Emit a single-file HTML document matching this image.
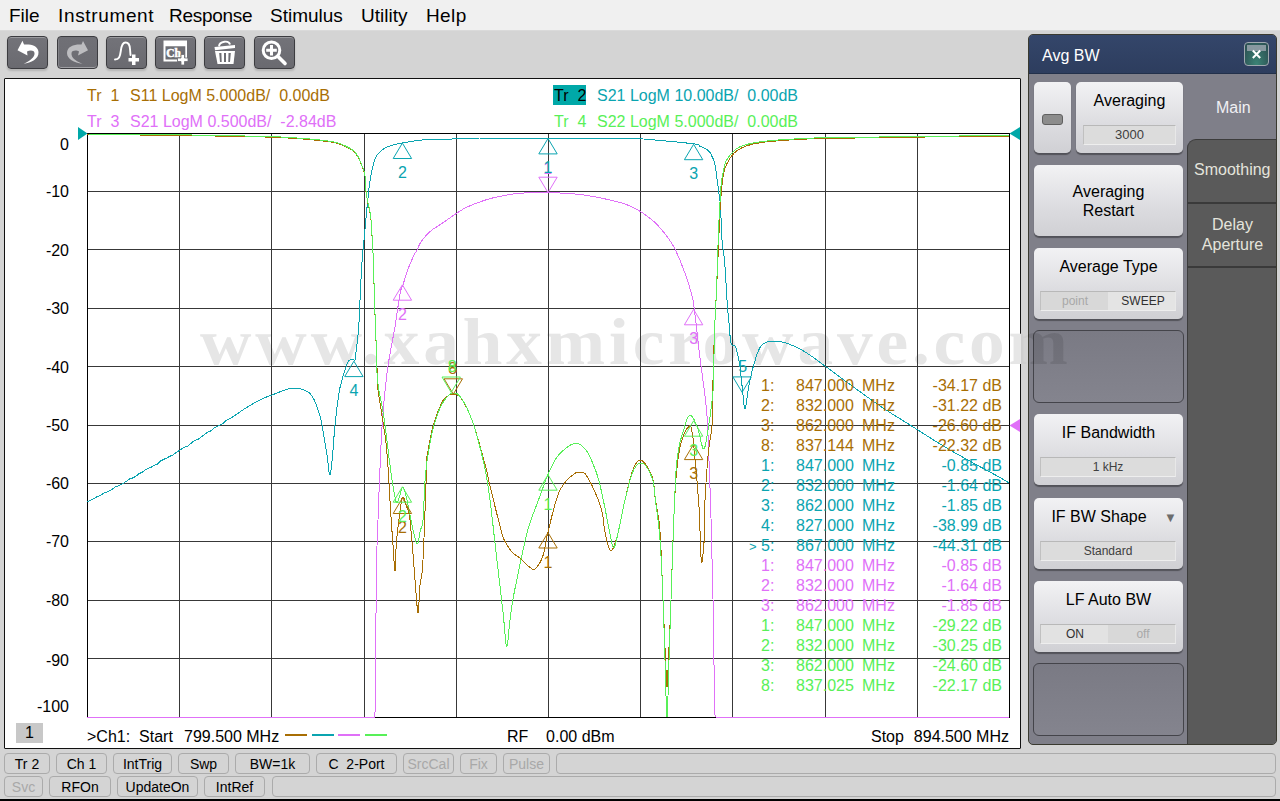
<!DOCTYPE html>
<html><head><meta charset="utf-8"><title>VNA</title>
<style>
*{box-sizing:border-box}
html,body{margin:0;padding:0}
body{width:1280px;height:801px;overflow:hidden;position:relative;background:#d4d4d4;font-family:"Liberation Sans",sans-serif;}
.a{position:absolute;white-space:pre;line-height:1}
.menu{position:absolute;left:0;top:0;width:1280px;height:31px;background:#f0f0f0;border-bottom:1px solid #dadada}
.menu span{position:absolute;top:6px;font-size:19px;color:#000;line-height:1}
.tb{position:absolute;top:36px;width:41px;height:33px;border-radius:4px;background:linear-gradient(#737379,#6a6a70);border:1px solid #3c3c40;box-shadow:0 2px 2px rgba(0,0,0,0.15), inset 0 1px 0 rgba(255,255,255,0.28)}
.tb svg{position:absolute;left:0;top:0}
.chart{position:absolute;left:4px;top:78px;width:1017px;height:671px;background:#fff;border:1px solid #111;border-radius:1px}
.rp{position:absolute;left:1028px;top:34px;width:249px;height:711px;background:#7f7f89;border:1px solid #3a3a30;border-radius:5px;overflow:hidden}
.title{position:absolute;left:0;top:0;width:249px;height:39px;background:linear-gradient(#34466a,#2d3d5e);border-bottom:1px solid #22304a}
.btn{position:absolute;left:5px;width:150px;height:72px;border-radius:5px;background:linear-gradient(#f2f2f4,#dcdce0 60%,#d0d0d4);box-shadow:0 2px 1px rgba(0,0,0,0.35);color:#000;font-size:16px;text-align:center}
.val{position:absolute;left:6px;width:137px;height:20px;background:#dcdcdc;border-top:1px solid #b8b8b8;border-left:1px solid #c0c0c0;border-bottom:1px solid #eeeeee;border-right:1px solid #e8e8e8;font-size:13px;color:#404040;text-align:center;line-height:18px}
.empty{position:absolute;left:5px;width:150px;height:73px;border-radius:6px;border:1px solid #44444a;background:linear-gradient(#7a7a84,#84848e)}
.sb{position:absolute;height:21px;border:1px solid #ababab;border-radius:4px;background:#d4d4d4;font-size:14px;color:#000;text-align:center;line-height:20px;white-space:pre}
.dis{color:#a8a8a8}
</style></head><body>

<div class="menu">
<span style="left:9px;letter-spacing:0px">File</span>
<span style="left:58px;letter-spacing:0.65px">Instrument</span>
<span style="left:169px;letter-spacing:-0.3px">Response</span>
<span style="left:270px;letter-spacing:0px">Stimulus</span>
<span style="left:361px;letter-spacing:0px">Utility</span>
<span style="left:426px;letter-spacing:0.4px">Help</span>
</div>
<div class="tb" style="left:7px"><svg width="41" height="33" viewBox="0 0 41 33"><g transform="translate(0,0)"><path d="M14.5 3.8 L16 7.5 C22 7 30 8 30.5 15 C31 22 23 26 15.5 26.8 C22 24 27 20 26.5 16 C26 13 22 13 19 14.5 L19.5 18.5 L9.5 13.2 Z" fill="#fff"/></g></svg></div>
<div class="tb" style="left:57px;box-shadow:inset 0 -1px 0 rgba(255,255,255,0.35), inset 1px 0 0 rgba(255,255,255,0.15);background:linear-gradient(#707076,#6c6c72)"><svg width="41" height="33" viewBox="0 0 41 33"><g transform="translate(-1,0)"><path d="M26 4 L31 13.2 L21 18.5 L22 14.5 C20 13 15 13 14.5 16 C14 21 19 24 25.5 26.8 C17 26 10 22 10 16 C10 9 18 7 24.5 7.5 Z" fill="#bdbdc0"/></g></svg></div>
<div class="tb" style="left:106px"><svg width="41" height="33" viewBox="0 0 41 33"><g transform="translate(-1,0)"><path d="M9 22.5 C13 22.5 14 20 14.8 14 C15.5 8 17 5.5 19.5 5.5 C22.5 5.5 23.8 8 24 12 L24.5 18" fill="none" stroke="#fff" stroke-width="1.9" stroke-linecap="round"/><path d="M26 17.5 h3.5 v3.5 h3.5 v3.5 h-3.5 v3.5 h-3.5 v-3.5 h-3.5 v-3.5 h3.5z" fill="#fff"/></g></svg></div>
<div class="tb" style="left:155px"><svg width="41" height="33" viewBox="0 0 41 33"><g transform="translate(-1,0)"><path d="M8.5 3.5 H32 V22 H30.3 V9.2 H10.5 V22.5 H22 V24.5 H8.5 Z" fill="#fff"/><text x="11.3" y="20.3" font-size="11.5" font-weight="bold" fill="#fff" stroke="#fff" stroke-width="0.5" font-family="Liberation Serif">Ch</text><path d="M26 17.5 h3.5 v3.5 h3.5 v3.5 h-3.5 v3.5 h-3.5 v-3.5 h-3.5 v-3.5 h3.5z" fill="#fff" stroke="#6c6c72" stroke-width="0.8"/></g></svg></div>
<div class="tb" style="left:204px"><svg width="41" height="33" viewBox="0 0 41 33"><g transform="translate(-1,0)"><path d="M10.5 10 L31 8 L31 11 L11 13.2 Z" fill="#fff"/><path d="M15 9.3 C15.5 4 25 3 26 7.5" fill="none" stroke="#fff" stroke-width="1.9"/><path d="M11 14 L31 14 L29.5 27 L13.5 27 Z" fill="#fff"/><path d="M15.2 16 L17.4 16 L17.7 25 L16 25 Z M20 16 L22 16 L22 25 L20 25 Z M24.5 16 L26.8 16 L26 25 L24.3 25 Z" fill="#6c6c72"/></g></svg></div>
<div class="tb" style="left:254px"><svg width="41" height="33" viewBox="0 0 41 33"><g transform="translate(-1,0)"><circle cx="17.5" cy="13.2" r="8.3" fill="none" stroke="#fff" stroke-width="3"/><path d="M16 8 h3 v3.7 h3.8 v3 h-3.8 v3.8 h-3 v-3.8 h-3.8 v-3 h3.8z" fill="#fff"/><path d="M24.5 20 L31 26.5" stroke="#fff" stroke-width="3.6" stroke-linecap="round"/></g></svg></div>
<div class="chart"></div>
<svg style="position:absolute;left:0;top:0" width="1280" height="801" viewBox="0 0 1280 801">
<text id="wm" transform="translate(200,364) scale(1.08,0.98)" x="0" y="0" font-family="Liberation Serif" font-weight="bold" font-size="66" fill="#e6e6e6" textLength="803.7" lengthAdjust="spacing">www.xahxmicrowave.com</text>
<path d="M87.5 133 V718 M179.5 133 V718 M271.5 133 V718 M364.5 133 V718 M456.5 133 V718 M548.5 133 V718 M640.5 133 V718 M732.5 133 V718 M825.5 133 V718 M917.5 133 V718 M1009.5 133 V718 M87 133.5 H1010 M87 191.5 H1010 M87 249.5 H1010 M87 308.5 H1010 M87 366.5 H1010 M87 425.5 H1010 M87 483.5 H1010 M87 541.5 H1010 M87 600.5 H1010 M87 658.5 H1010 M87 717.5 H1010" stroke="#383838" stroke-width="1" fill="none" shape-rendering="crispEdges"/>
<rect x="87.5" y="133.5" width="922" height="584" fill="none" stroke="#000" stroke-width="1" shape-rendering="crispEdges"/>
<polyline points="87.0,502.0 93.0,499.0 97.2,496.7 101.4,494.8 104.9,492.5 108.3,491.6 111.7,489.6 115.5,486.9 119.2,485.6 123.0,483.5 126.3,481.4 129.6,479.0 132.9,477.9 136.2,476.0 139.2,473.5 142.2,472.3 145.2,470.0 148.2,468.3 151.2,467.2 154.3,465.2 157.3,464.1 160.4,461.1 163.4,459.5 166.5,458.1 169.8,456.3 173.2,454.8 176.6,452.2 180.0,450.0 183.8,447.5 187.5,446.2 191.3,443.1 194.7,440.3 198.0,439.5 201.4,436.8 204.5,434.5 207.6,432.3 210.8,430.9 213.8,428.3 216.9,426.7 220.0,425.0 223.2,423.5 226.3,420.4 229.5,418.8 232.7,416.9 235.8,414.9 238.9,412.7 243.3,409.6 247.6,407.0 251.3,404.8 255.0,402.5 260.4,399.6 264.4,397.8 268.0,396.5 272.0,395.0 277.0,393.0 282.2,390.9 287.4,389.1 292.0,388.0 295.9,388.0 299.3,388.5 302.3,389.4 305.0,390.5 307.2,391.5 309.0,392.7 310.5,394.2 312.0,396.0 313.4,398.3 314.7,401.0 315.9,404.0 317.0,407.0 318.1,410.0 319.1,413.1 320.1,416.4 321.0,420.0 321.8,423.9 322.6,428.2 323.3,432.6 324.0,437.0 324.8,441.4 325.5,445.8 326.2,450.3 327.0,455.0 327.8,460.9 328.5,467.7 329.2,473.1 330.0,475.0 330.8,471.9 331.6,465.3 332.3,457.3 333.0,450.0 333.5,443.9 333.9,437.9 334.4,431.7 335.0,425.0 335.9,417.0 336.9,408.2 338.0,399.8 339.0,393.0 339.8,388.3 340.6,385.1 341.3,382.6 342.0,380.0 342.8,377.2 343.5,374.7 344.2,372.3 345.0,370.0 345.8,367.7 346.6,365.5 347.3,363.5 348.0,362.0 348.5,361.0 349.0,360.5 349.5,360.3 350.0,360.0 350.7,359.7 351.5,359.6 352.3,359.5 353.0,359.5 353.6,359.8 354.1,360.0 354.6,360.0 355.0,360.0 355.3,358.8 355.5,357.1 355.7,354.8 356.0,352.0 356.5,348.3 357.0,343.8 357.5,339.2 358.0,335.0 358.3,331.7 358.6,328.8 358.8,325.8 359.0,322.0 359.2,317.5 359.4,312.6 359.7,306.8 360.0,300.0 360.4,291.2 360.9,281.0 361.5,270.8 362.0,262.0 362.5,255.4 363.0,250.0 363.5,245.1 364.0,240.0 364.5,234.6 365.0,229.3 365.5,223.9 366.0,218.0 366.6,211.3 367.4,203.9 368.1,196.9 368.7,191.0 369.2,186.7 369.6,183.6 370.0,180.9 370.5,178.0 371.1,174.9 371.7,171.8 372.3,168.8 373.0,166.0 373.7,163.4 374.4,161.1 375.2,158.9 376.0,157.0 376.9,155.4 377.9,154.2 378.9,153.1 380.0,152.0 381.1,150.9 382.2,149.9 383.5,148.9 385.0,148.0 386.8,147.2 388.7,146.4 390.8,145.7 393.0,145.0 395.0,144.5 397.0,144.0 399.4,143.5 402.5,143.0 406.7,142.3 411.7,141.4 416.9,140.6 422.0,140.0 426.3,139.7 430.3,139.7 434.9,139.6 441.0,139.5 448.7,139.2 457.4,138.7 467.7,138.3 480.0,138.0 494.8,138.0 511.8,138.0 529.9,138.0 548.0,138.0 566.9,138.0 586.9,138.0 605.9,138.0 622.0,138.0 634.1,138.4 643.4,139.0 651.6,139.7 660.0,140.5 669.7,141.3 679.6,142.3 688.4,143.2 695.0,144.0 698.3,144.7 699.3,145.2 699.4,145.7 700.0,146.3 701.5,146.9 703.1,147.5 704.6,148.1 706.0,148.8 707.2,149.6 708.2,150.6 709.2,151.5 710.0,152.5 710.6,153.4 711.1,154.4 711.5,155.4 712.0,156.4 712.5,157.4 713.0,158.5 713.5,159.7 714.0,161.0 714.4,162.5 714.8,164.1 715.1,165.9 715.5,168.0 715.9,170.3 716.2,172.9 716.6,175.7 717.0,178.8 717.5,182.3 718.0,186.3 718.5,190.3 719.0,194.0 719.4,196.9 719.8,199.4 720.2,202.4 720.6,207.0 720.9,214.1 721.2,222.9 721.6,232.1 722.0,240.0 722.6,245.9 723.3,250.7 724.0,255.6 724.7,262.0 725.3,270.7 725.9,280.9 726.5,291.2 727.0,300.0 727.5,306.9 728.0,312.6 728.5,317.8 729.0,323.0 729.5,328.6 729.9,334.3 730.4,339.3 731.0,343.0 731.7,344.9 732.5,345.3 733.3,345.3 734.0,345.5 734.5,345.7 734.9,345.7 735.4,346.2 736.0,348.0 736.9,351.5 738.0,356.2 739.1,361.6 740.0,367.0 740.7,372.6 741.3,378.5 741.9,384.4 742.5,390.0 743.1,396.0 743.7,402.3 744.3,407.2 745.0,409.0 745.8,406.4 746.7,400.6 747.7,393.5 748.7,387.0 749.8,381.4 751.0,375.7 752.3,370.2 753.7,365.0 755.2,360.0 756.7,355.2 758.3,350.9 760.0,347.5 761.7,345.2 763.4,343.7 765.2,342.8 767.0,342.0 769.0,341.4 771.0,341.1 773.0,341.0 775.0,341.0 776.8,341.1 778.5,341.3 780.2,341.6 782.0,342.0 783.9,342.5 785.8,343.0 787.8,343.7 790.0,344.5 792.3,345.4 794.8,346.4 797.3,347.6 800.0,349.0 802.8,350.6 805.8,352.4 808.9,354.4 812.0,356.5 814.3,358.1 816.1,359.4 819.1,361.7 825.0,366.0 835.2,373.6 848.6,383.4 862.7,393.7 875.0,402.5 884.7,409.1 893.1,414.5 901.2,419.5 910.0,425.0 919.4,431.0 929.1,437.2 939.2,443.5 950.0,450.0 962.8,457.2 976.9,465.0 990.1,472.1 1000.0,477.5 1005.3,480.6 1007.6,482.0 1008.3,482.5 1009.0,483.0" fill="none" stroke="#0aa4b0" stroke-width="1.0" stroke-linejoin="round" shape-rendering="crispEdges" />
<polyline points="87.0,717.0 145.4,717.0 230.7,717.0 316.1,717.0 374.6,717.0 375.6,705.5 375.6,689.1 375.6,669.9 375.6,650.0 375.9,627.9 376.1,603.3 376.4,579.5 376.7,560.0 377.0,546.2 377.4,536.1 377.7,528.0 378.0,520.0 378.2,513.0 378.4,507.6 378.6,501.3 379.0,492.0 379.6,477.9 380.3,460.6 381.1,442.7 382.0,427.0 382.9,413.9 383.9,402.0 385.0,391.4 386.0,381.7 387.0,373.4 387.9,366.5 388.9,360.1 390.0,353.6 391.2,347.0 392.4,340.6 393.7,334.1 395.0,327.0 396.3,318.6 397.6,309.3 398.9,300.6 400.0,293.8 400.9,289.8 401.7,287.7 402.4,286.4 403.0,284.8 403.6,282.9 404.1,281.1 404.6,279.3 405.2,277.3 406.0,274.9 406.9,272.3 407.9,269.6 408.9,266.9 410.0,264.2 411.1,261.4 412.3,258.8 413.4,256.4 414.4,254.5 415.3,252.8 416.3,251.3 417.2,249.6 418.0,247.8 418.7,246.1 419.6,244.2 420.9,242.1 422.7,239.7 424.9,236.9 427.3,234.2 429.9,231.7 432.6,229.5 435.6,227.5 438.7,225.5 441.9,223.4 445.4,221.0 449.0,218.5 452.7,215.9 456.1,213.7 458.8,211.9 461.2,210.3 463.8,208.7 467.3,207.0 472.1,204.9 477.8,202.7 483.9,200.5 489.8,198.7 495.7,197.2 501.7,196.0 507.4,195.0 512.3,194.2 515.7,193.6 518.2,193.3 520.6,193.2 524.2,193.0 529.1,192.8 534.8,192.6 541.2,192.6 548.0,192.6 555.5,192.8 563.6,193.2 571.9,193.7 580.0,194.5 587.9,195.6 595.8,197.0 603.2,198.5 610.0,200.0 615.8,201.4 620.8,202.7 625.5,204.2 630.0,206.0 634.4,208.1 638.6,210.5 642.7,213.0 646.5,215.7 650.1,218.4 653.5,221.2 656.8,224.4 660.2,228.0 663.7,232.2 667.3,236.8 670.7,241.8 674.0,247.3 677.0,253.4 679.9,260.1 682.6,266.9 685.0,273.3 687.1,279.2 688.9,285.0 690.5,290.4 691.8,295.3 692.7,298.8 693.2,301.2 693.7,304.5 694.5,310.4 695.7,320.2 697.1,332.7 698.6,346.1 700.0,358.4 701.5,369.6 703.0,380.5 704.4,390.8 705.5,400.0 706.3,407.3 706.8,413.1 707.2,419.0 707.6,426.8 708.1,436.9 708.6,448.4 709.0,460.8 709.5,473.6 710.0,487.9 710.5,503.5 711.0,518.3 711.3,530.0 711.5,536.8 711.5,540.2 711.6,543.4 711.7,549.5 712.0,558.7 712.3,569.7 712.6,582.9 713.0,599.0 713.4,620.8 713.8,647.0 714.1,672.5 714.5,692.0 714.5,703.6 714.5,710.3 714.5,714.1 715.8,717.0 775.4,717.0 862.5,717.0 949.5,717.0 1009.0,717.0" fill="none" stroke="#e070f8" stroke-width="1.0" stroke-linejoin="round" shape-rendering="crispEdges" />
<polyline points="87.0,134.6 104.5,134.7 129.8,134.9 156.9,135.2 180.0,135.4 198.0,135.7 213.9,136.0 227.8,136.2 240.0,136.5 249.8,136.7 257.4,136.8 264.1,137.0 271.0,137.2 278.6,137.5 286.2,137.9 293.4,138.4 300.0,138.8 305.8,139.2 310.9,139.7 315.6,140.1 320.0,140.6 324.2,141.1 328.1,141.6 331.7,142.1 335.0,142.8 337.9,143.6 340.4,144.5 342.8,145.4 345.0,146.4 347.2,147.4 349.3,148.5 351.3,149.6 353.0,150.9 354.5,152.2 355.8,153.7 356.9,155.2 358.0,157.0 359.1,159.1 360.1,161.3 361.1,163.8 362.0,166.2 362.9,168.5 363.7,170.9 364.4,173.4 365.0,176.3 365.4,179.8 365.6,183.8 365.7,187.9 366.0,191.6 366.4,194.8 366.9,197.8 367.4,200.7 368.0,203.6 368.6,206.4 369.3,209.1 369.9,212.0 370.5,215.6 371.0,219.9 371.3,224.8 371.7,230.1 372.0,235.6 372.3,241.1 372.7,246.9 373.0,253.2 373.3,260.6 373.6,269.5 373.9,279.7 374.2,290.2 374.5,300.6 374.9,310.6 375.2,320.6 375.6,330.6 376.0,340.6 376.4,351.3 376.8,362.5 377.2,372.8 377.5,380.6 377.6,384.7 377.6,386.2 377.7,387.2 378.0,390.0 378.7,395.0 379.7,401.2 380.9,408.1 382.0,415.6 383.2,423.2 384.4,431.2 385.7,440.2 386.8,451.0 387.9,464.9 388.9,481.1 389.8,497.3 390.6,511.0 391.3,521.5 391.9,530.1 392.5,537.7 393.0,545.0 393.5,553.4 394.1,562.1 394.5,568.7 395.0,571.0 395.4,567.4 395.6,559.4 396.0,549.4 396.6,540.0 397.6,530.7 398.8,520.5 400.0,511.1 401.0,504.0 401.6,499.9 402.1,497.8 402.5,497.0 403.0,497.0 403.7,497.8 404.4,499.6 405.2,502.2 406.0,505.0 406.9,507.2 407.9,509.2 408.9,512.9 410.0,520.0 411.2,532.5 412.6,548.9 413.9,565.8 415.0,580.0 415.9,591.6 416.7,602.0 417.4,609.7 418.0,613.0 418.5,610.2 419.0,602.6 419.5,593.2 420.0,585.0 420.7,580.3 421.4,577.0 422.2,571.5 423.0,560.0 424.0,538.0 425.1,508.8 426.1,480.1 426.8,460.0 427.1,455.0 427.0,455.0 427.0,455.6 427.4,455.0 428.3,449.5 429.6,442.1 431.1,434.2 432.8,427.0 434.8,420.5 437.0,414.2 439.2,408.5 441.2,404.0 442.7,401.0 444.0,399.2 445.2,398.1 446.5,397.0 448.0,395.8 449.5,394.8 451.2,394.1 453.0,394.0 455.0,394.2 457.0,394.8 459.3,396.2 461.7,399.0 464.3,403.2 467.1,408.5 470.0,415.1 473.0,423.0 476.3,433.4 480.0,445.9 483.3,458.2 486.0,468.0 487.5,473.8 488.1,477.1 488.7,480.3 490.0,486.0 492.4,495.9 495.5,508.4 498.6,520.7 501.0,530.0 502.4,535.1 503.1,537.6 503.8,539.0 504.8,541.0 506.3,543.9 508.2,546.8 510.1,549.6 512.0,552.0 513.9,553.8 515.9,555.2 517.9,556.5 519.8,558.0 521.7,559.7 523.5,561.6 525.3,563.4 527.0,565.0 528.6,566.4 530.2,567.7 531.7,568.7 532.9,569.3 533.8,569.3 534.5,569.3 535.2,568.8 536.0,568.0 537.0,566.9 538.2,565.4 539.3,563.7 540.4,561.8 541.3,559.8 542.2,557.8 543.1,555.3 544.0,552.0 544.9,548.0 545.7,543.5 546.6,538.2 548.0,532.0 549.9,524.1 552.2,514.8 554.6,505.6 556.9,498.0 558.9,492.6 560.9,488.5 562.9,485.2 565.3,482.0 568.2,478.8 571.5,475.9 574.7,473.5 577.5,472.0 579.7,472.0 581.4,472.0 583.1,472.0 585.0,473.6 587.2,476.7 589.6,480.9 592.1,485.7 594.3,490.5 596.4,495.4 598.5,500.6 600.3,505.9 601.8,511.0 602.8,515.9 603.5,520.8 604.0,525.6 604.6,530.0 605.4,534.2 606.3,538.3 607.1,542.0 608.0,545.0 608.8,547.4 609.7,549.3 610.5,550.5 611.4,550.8 612.3,549.9 613.2,548.1 614.1,545.6 615.0,543.0 615.9,540.5 616.7,537.9 617.6,534.6 618.7,530.0 620.0,523.7 621.5,516.2 623.2,508.0 625.0,500.0 627.0,491.6 629.2,482.6 631.4,474.3 633.6,468.0 635.7,463.8 637.7,461.2 639.8,460.5 642.0,460.5 644.6,462.9 647.5,467.1 650.3,472.2 652.4,477.4 653.6,482.5 654.3,487.9 654.7,493.7 655.4,500.0 656.5,506.0 657.6,512.0 658.8,519.5 659.9,530.0 660.8,544.7 661.5,562.5 662.3,581.6 663.0,600.0 663.8,618.7 664.6,638.3 665.4,656.2 666.0,670.0 666.4,678.7 666.6,683.8 666.8,686.2 667.0,686.8 667.2,686.2 667.4,683.8 667.6,678.7 668.0,670.0 668.6,656.9 669.3,640.2 670.2,620.9 671.0,600.0 671.8,575.8 672.7,548.4 673.7,521.8 674.6,500.0 675.5,484.3 676.5,472.5 677.5,463.3 678.6,455.0 679.8,447.8 681.2,442.4 682.6,438.0 684.0,434.3 685.5,431.0 687.1,428.4 688.6,426.7 689.8,425.9 690.6,426.3 691.2,427.7 691.6,429.7 692.0,432.0 692.4,434.3 692.8,436.8 693.2,439.9 693.6,444.0 694.1,449.2 694.7,455.2 695.3,462.2 696.0,470.0 696.8,478.7 697.6,488.3 698.4,498.8 699.2,510.0 699.8,524.4 700.3,541.1 700.9,555.5 701.5,563.0 702.3,560.7 703.3,551.7 704.2,540.1 704.8,530.0 705.0,522.7 704.9,516.0 704.8,508.8 705.0,500.0 705.6,488.6 706.5,475.4 707.5,462.2 708.5,451.0 709.5,442.9 710.6,436.6 711.6,430.6 712.3,423.0 712.7,412.8 712.9,401.0 712.9,389.5 713.0,380.0 713.1,373.9 713.2,369.8 713.3,365.9 713.5,360.0 713.8,351.2 714.2,340.6 714.6,329.8 715.0,320.0 715.4,312.1 715.7,305.3 716.1,298.3 716.5,290.0 717.0,279.3 717.5,267.2 718.1,255.2 718.5,245.0 718.8,237.2 719.1,230.8 719.3,225.3 719.5,220.0 719.7,215.1 720.0,210.8 720.2,206.7 720.5,202.5 720.8,198.0 721.2,193.5 721.6,189.1 722.0,185.0 722.4,181.3 722.9,177.9 723.4,174.8 724.0,172.0 724.6,169.6 725.3,167.5 726.1,165.5 727.0,163.5 728.2,161.3 729.5,159.0 730.9,156.9 732.5,154.9 734.1,153.2 735.8,151.6 737.8,150.2 740.0,148.8 742.5,147.5 745.3,146.3 748.5,145.3 752.0,144.3 755.8,143.5 759.9,142.8 764.5,142.1 770.0,141.5 776.8,140.9 784.6,140.3 792.6,139.8 800.0,139.4 805.0,139.1 808.6,138.9 814.2,138.7 825.0,138.5 843.3,138.2 866.8,137.8 892.4,137.4 917.0,137.1 942.2,136.8 968.8,136.5 992.5,136.3 1009.0,136.1" fill="none" stroke="#a86e04" stroke-width="1.0" stroke-linejoin="round" shape-rendering="crispEdges" />
<polyline points="87.0,134.0 104.5,134.1 129.8,134.3 156.9,134.6 180.0,134.8 198.0,135.1 213.9,135.4 227.8,135.6 240.0,135.9 249.8,136.1 257.4,136.2 264.1,136.4 271.0,136.6 278.6,136.9 286.2,137.3 293.4,137.8 300.0,138.2 305.8,138.6 310.9,139.1 315.6,139.5 320.0,140.0 324.2,140.5 328.1,141.0 331.7,141.5 335.0,142.2 337.9,143.0 340.4,143.9 342.8,144.8 345.0,145.8 347.2,146.8 349.3,147.9 351.3,149.0 353.0,150.3 354.5,151.6 355.8,153.1 356.9,154.6 358.0,156.4 359.1,158.5 360.1,160.8 361.1,163.2 362.0,165.6 362.9,167.9 363.7,170.3 364.4,172.8 365.0,175.7 365.4,179.2 365.6,183.2 365.7,187.3 366.0,191.0 366.4,194.2 366.9,197.2 367.4,200.1 368.0,203.0 368.6,205.8 369.3,208.5 369.9,211.4 370.5,215.0 371.0,219.3 371.3,224.2 371.7,229.5 372.0,235.0 372.3,240.5 372.7,246.2 373.0,252.6 373.3,260.0 373.6,268.9 373.9,279.1 374.2,289.6 374.5,300.0 374.9,310.0 375.2,320.0 375.6,330.0 376.0,340.0 376.3,350.1 376.4,360.2 376.8,370.2 377.5,380.0 378.8,389.6 380.6,398.9 382.4,408.2 384.0,417.5 385.3,427.2 386.5,437.0 387.7,446.5 388.7,455.0 389.6,462.3 390.5,468.8 391.2,474.6 392.0,480.0 392.8,485.1 393.6,489.7 394.3,493.7 395.0,497.0 395.5,499.6 396.0,501.6 396.5,502.7 397.0,503.0 397.7,502.0 398.4,499.9 399.2,497.3 400.0,495.0 400.7,492.5 401.4,489.7 402.2,487.5 403.0,487.0 403.9,488.5 404.9,491.4 405.9,495.4 407.0,500.0 408.2,505.5 409.4,512.1 410.7,518.9 412.0,525.0 413.3,530.9 414.6,536.9 415.9,541.7 417.0,544.0 418.0,542.7 418.9,538.8 419.7,534.0 420.5,530.0 421.2,527.9 421.8,526.6 422.4,524.4 423.0,520.0 423.5,512.0 424.0,501.5 424.4,490.5 425.0,481.0 425.6,473.6 426.3,467.3 427.0,461.3 428.0,455.0 429.2,448.0 430.5,440.7 431.9,433.5 433.6,426.8 435.5,420.4 437.5,414.3 439.7,408.7 442.0,404.0 444.5,400.0 447.1,396.7 449.8,394.3 452.4,393.0 454.8,393.0 457.0,393.6 459.3,395.6 461.7,398.7 464.4,403.1 467.2,408.6 470.1,415.3 473.0,423.0 475.9,432.2 478.8,442.8 481.6,453.7 484.0,464.0 485.9,473.1 487.3,481.6 488.7,490.4 490.0,500.0 491.3,510.5 492.6,521.6 493.9,533.6 495.4,546.8 497.2,562.5 499.3,580.1 501.3,597.4 503.0,612.0 504.2,624.3 505.1,635.3 505.9,643.3 506.7,647.0 507.5,644.6 508.3,637.3 509.1,628.2 510.0,620.0 510.8,614.0 511.5,608.5 512.5,602.1 514.0,593.6 516.5,581.2 519.6,566.0 522.8,551.1 525.4,539.3 527.2,532.0 528.4,527.5 529.6,524.1 531.0,520.0 532.7,515.2 534.5,510.4 536.4,505.4 538.5,500.0 540.7,493.9 543.1,487.2 545.5,480.6 548.0,474.5 550.5,469.0 552.9,463.9 555.6,459.2 558.7,455.0 562.4,451.1 566.7,447.6 570.9,444.8 574.6,443.3 577.7,443.3 580.3,444.6 582.7,446.6 585.0,449.0 587.1,451.6 588.9,454.6 590.6,458.2 592.4,462.4 594.2,466.9 596.1,471.7 598.0,477.6 600.0,485.0 602.3,495.3 604.9,507.8 607.3,520.1 609.3,530.0 610.7,537.2 611.7,542.9 612.6,546.7 613.6,548.0 614.8,546.3 616.0,542.0 617.3,536.2 618.7,530.0 620.1,523.3 621.6,515.8 623.2,507.8 625.0,500.0 627.0,492.0 629.1,483.5 631.3,475.9 633.6,470.0 635.9,466.2 638.3,463.8 640.6,463.3 643.0,463.3 645.5,465.5 648.1,469.4 650.5,474.2 652.4,479.0 653.6,483.4 654.2,488.0 654.7,493.3 655.4,500.0 656.5,508.2 657.7,517.6 658.9,528.1 660.0,540.0 660.9,553.6 661.7,568.8 662.4,584.5 663.0,600.0 663.6,615.1 664.1,630.2 664.5,645.2 665.0,660.0 665.5,677.1 666.0,695.8 666.5,710.8 667.0,717.0 667.5,710.8 668.0,695.8 668.5,677.1 669.0,660.0 669.5,646.1 669.9,632.7 670.4,617.9 671.0,600.0 671.8,576.5 672.7,549.1 673.7,522.1 674.6,500.0 675.3,484.4 675.9,472.9 676.6,463.6 677.6,455.0 679.0,446.8 680.6,439.9 682.4,433.9 684.0,428.7 685.5,423.8 686.8,419.6 688.2,416.5 689.8,415.2 691.6,416.1 693.6,418.8 695.5,422.6 697.3,426.8 698.9,432.2 700.4,439.0 701.8,445.0 703.0,448.4 704.0,448.4 704.9,447.0 705.7,443.4 706.7,438.0 708.1,429.7 709.7,418.9 711.2,407.8 712.3,398.7 712.8,393.5 713.0,390.6 713.0,387.1 713.2,380.0 713.6,366.5 714.2,348.8 714.7,331.7 715.0,320.0 715.0,320.0 715.0,320.0 715.0,320.0 715.0,320.0 715.3,315.0 715.7,307.8 716.1,299.3 716.5,290.0 716.9,279.3 717.3,267.2 717.7,255.2 718.0,245.0 718.3,237.2 718.5,230.8 718.8,225.3 719.0,220.0 719.2,215.1 719.5,210.9 719.7,206.9 720.0,202.5 720.3,197.6 720.6,192.3 720.9,187.2 721.3,182.8 721.8,179.1 722.4,175.8 723.0,173.0 723.5,170.6 723.8,168.9 724.0,167.7 724.2,166.8 724.5,165.6 724.9,164.2 725.5,162.7 726.1,161.1 727.0,159.5 728.1,157.8 729.4,155.9 730.9,154.1 732.5,152.4 734.1,150.8 735.8,149.4 737.8,148.0 740.0,146.8 742.5,145.7 745.3,144.8 748.5,144.0 752.0,143.2 755.8,142.5 759.9,141.8 764.5,141.3 770.0,140.7 776.8,140.1 784.6,139.6 792.6,139.1 800.0,138.7 805.0,138.4 808.6,138.2 814.2,138.0 825.0,137.8 843.3,137.5 866.8,137.2 892.4,136.8 917.0,136.5 942.2,136.2 968.8,135.9 992.5,135.7 1009.0,135.5" fill="none" stroke="#58f058" stroke-width="1.0" stroke-linejoin="round" shape-rendering="crispEdges" />
<text x="547.6" y="173.5" font-family="Liberation Sans" font-size="16" fill="#e070f8" text-anchor="middle">1</text><path d="M548.0 138.5 L538.8 153.9 L557.2 153.9 Z" fill="none" stroke="#0aa4b0" stroke-width="1"/><text x="548.0" y="173.464" font-family="Liberation Sans" font-size="16" fill="#0aa4b0" text-anchor="middle">1</text><path d="M402.4 143.1 L393.2 158.5 L411.6 158.5 Z" fill="none" stroke="#0aa4b0" stroke-width="1"/><text x="402.42105263157896" y="178.0776" font-family="Liberation Sans" font-size="16" fill="#0aa4b0" text-anchor="middle">2</text><path d="M693.6 144.3 L684.4 159.7 L702.8 159.7 Z" fill="none" stroke="#0aa4b0" stroke-width="1"/><text x="693.578947368421" y="179.304" font-family="Liberation Sans" font-size="16" fill="#0aa4b0" text-anchor="middle">3</text><path d="M353.9 361.2 L344.7 376.6 L363.1 376.6 Z" fill="none" stroke="#0aa4b0" stroke-width="1"/><text x="353.89473684210526" y="396.2016" font-family="Liberation Sans" font-size="16" fill="#0aa4b0" text-anchor="middle">4</text><path d="M742.1 392.3 L732.9 376.9 L751.3 376.9 Z" fill="none" stroke="#0aa4b0" stroke-width="1"/><text x="742.6052631578947" y="372.2704" font-family="Liberation Sans" font-size="16" fill="#0aa4b0" text-anchor="middle">5</text><path d="M548.0 192.6 L538.8 177.2 L557.2 177.2 Z" fill="none" stroke="#e070f8" stroke-width="1"/><path d="M402.4 284.8 L393.2 300.2 L411.6 300.2 Z" fill="none" stroke="#e070f8" stroke-width="1"/><text x="402.42105263157896" y="319.84000000000003" font-family="Liberation Sans" font-size="16" fill="#e070f8" text-anchor="middle">2</text><path d="M693.6 309.4 L684.4 324.8 L702.8 324.8 Z" fill="none" stroke="#e070f8" stroke-width="1"/><text x="693.578947368421" y="344.36800000000005" font-family="Liberation Sans" font-size="16" fill="#e070f8" text-anchor="middle">3</text><path d="M548.0 532.6 L538.8 548.0 L557.2 548.0 Z" fill="none" stroke="#a86e04" stroke-width="1"/><text x="548.0" y="567.6056000000001" font-family="Liberation Sans" font-size="16" fill="#a86e04" text-anchor="middle">1</text><path d="M402.4 498.1 L393.2 513.5 L411.6 513.5 Z" fill="none" stroke="#a86e04" stroke-width="1"/><text x="402.42105263157896" y="533.1496" font-family="Liberation Sans" font-size="16" fill="#a86e04" text-anchor="middle">2</text><path d="M693.6 444.2 L684.4 459.6 L702.8 459.6 Z" fill="none" stroke="#a86e04" stroke-width="1"/><text x="693.578947368421" y="479.188" font-family="Liberation Sans" font-size="16" fill="#a86e04" text-anchor="middle">3</text><path d="M453.3 394.2 L444.1 378.8 L462.5 378.8 Z" fill="none" stroke="#a86e04" stroke-width="1"/><path d="M548.0 474.8 L538.8 490.2 L557.2 490.2 Z" fill="none" stroke="#58f058" stroke-width="1"/><text x="548.0" y="509.78959999999995" font-family="Liberation Sans" font-size="16" fill="#58f058" text-anchor="middle">1</text><path d="M402.4 486.8 L393.2 502.2 L411.6 502.2 Z" fill="none" stroke="#58f058" stroke-width="1"/><text x="402.42105263157896" y="521.8199999999999" font-family="Liberation Sans" font-size="16" fill="#58f058" text-anchor="middle">2</text><path d="M693.6 420.8 L684.4 436.2 L702.8 436.2 Z" fill="none" stroke="#58f058" stroke-width="1"/><text x="693.578947368421" y="455.828" font-family="Liberation Sans" font-size="16" fill="#58f058" text-anchor="middle">3</text><path d="M451.2 392.4 L442.0 377.0 L460.4 377.0 Z" fill="none" stroke="#58f058" stroke-width="1"/><text x="452.7" y="373.5" font-family="Liberation Sans" font-size="16" fill="#a86e04" text-anchor="middle">8</text><text x="452.3" y="372" font-family="Liberation Sans" font-size="16" fill="#58f058" text-anchor="middle">8</text>
<path d="M78 127 L87.5 133.5 L78 140 Z" fill="#00a8a8"/>
<path d="M1020 127 L1009.5 133.5 L1020 140 Z" fill="#00a8a8"/>
<path d="M1020 419 L1009.5 425.5 L1020 432 Z" fill="#e070f8"/>
<rect x="285" y="734" width="22" height="2" fill="#a86e04"/>
<rect x="312" y="734" width="22" height="2" fill="#0aa4b0"/>
<rect x="338" y="734" width="22" height="2" fill="#e070f8"/>
<rect x="365" y="734" width="22" height="2" fill="#58f058"/>
</svg>
<div class="a" style="left:87px;top:88px;font-size:16px;color:#a86e04;">Tr  1</div>
<div class="a" style="left:130px;top:88px;font-size:16px;color:#a86e04;">S11 LogM 5.000dB/  0.00dB</div>
<div class="a" style="left:87px;top:114px;font-size:16px;color:#e070f8;">Tr  3</div>
<div class="a" style="left:130px;top:114px;font-size:16px;color:#e070f8;">S21 LogM 0.500dB/  -2.84dB</div>
<div class="a" style="left:553px;top:85px;width:33px;height:20px;background:#00a8a8"></div>
<div class="a" style="left:554px;top:88px;font-size:16px;color:#000;">Tr  2</div>
<div class="a" style="left:597px;top:88px;font-size:16px;color:#0aa4b0;">S21 LogM 10.00dB/  0.00dB</div>
<div class="a" style="left:554px;top:114px;font-size:16px;color:#58f058;">Tr  4</div>
<div class="a" style="left:597px;top:114px;font-size:16px;color:#58f058;">S22 LogM 5.000dB/  0.00dB</div>
<div class="a" style="left:19px;top:137px;width:50px;text-align:right;font-size:16px;color:#000">0</div>
<div class="a" style="left:19px;top:184px;width:50px;text-align:right;font-size:16px;color:#000">-10</div>
<div class="a" style="left:19px;top:243px;width:50px;text-align:right;font-size:16px;color:#000">-20</div>
<div class="a" style="left:19px;top:301px;width:50px;text-align:right;font-size:16px;color:#000">-30</div>
<div class="a" style="left:19px;top:360px;width:50px;text-align:right;font-size:16px;color:#000">-40</div>
<div class="a" style="left:19px;top:418px;width:50px;text-align:right;font-size:16px;color:#000">-50</div>
<div class="a" style="left:19px;top:476px;width:50px;text-align:right;font-size:16px;color:#000">-60</div>
<div class="a" style="left:19px;top:534px;width:50px;text-align:right;font-size:16px;color:#000">-70</div>
<div class="a" style="left:19px;top:593px;width:50px;text-align:right;font-size:16px;color:#000">-80</div>
<div class="a" style="left:19px;top:653px;width:50px;text-align:right;font-size:16px;color:#000">-90</div>
<div class="a" style="left:19px;top:699px;width:50px;text-align:right;font-size:16px;color:#000">-100</div>
<div class="a" style="left:16px;top:723px;width:27px;height:20px;background:#c8c8c8;font-size:16px;text-align:center;line-height:20px">1</div>
<div class="a" style="left:87px;top:729px;font-size:16px;color:#000;">&gt;Ch1:  Start</div>
<div class="a" style="left:184px;top:729px;font-size:16px;color:#000;">799.500 MHz</div>
<div class="a" style="left:507px;top:729px;font-size:16px;color:#000;">RF    0.00 dBm</div>
<div class="a" style="left:871px;top:729px;font-size:16px;color:#000;">Stop</div>
<div class="a" style="left:850px;top:729px;width:159px;text-align:right;font-size:16px;color:#000">894.500 MHz</div>
<div class="a" style="left:761px;top:378.0px;font-size:16px;color:#a86e04;">1:</div>
<div class="a" style="left:796px;top:378.0px;font-size:16px;color:#a86e04;">847.000</div>
<div class="a" style="left:862px;top:378.0px;font-size:16px;color:#a86e04;">MHz</div>
<div class="a" style="left:900px;top:378.0px;width:102px;text-align:right;font-size:16px;color:#a86e04">-34.17 dB</div>
<div class="a" style="left:761px;top:398.0px;font-size:16px;color:#a86e04;">2:</div>
<div class="a" style="left:796px;top:398.0px;font-size:16px;color:#a86e04;">832.000</div>
<div class="a" style="left:862px;top:398.0px;font-size:16px;color:#a86e04;">MHz</div>
<div class="a" style="left:900px;top:398.0px;width:102px;text-align:right;font-size:16px;color:#a86e04">-31.22 dB</div>
<div class="a" style="left:761px;top:418.0px;font-size:16px;color:#a86e04;">3:</div>
<div class="a" style="left:796px;top:418.0px;font-size:16px;color:#a86e04;">862.000</div>
<div class="a" style="left:862px;top:418.0px;font-size:16px;color:#a86e04;">MHz</div>
<div class="a" style="left:900px;top:418.0px;width:102px;text-align:right;font-size:16px;color:#a86e04">-26.60 dB</div>
<div class="a" style="left:761px;top:438.0px;font-size:16px;color:#a86e04;">8:</div>
<div class="a" style="left:796px;top:438.0px;font-size:16px;color:#a86e04;">837.144</div>
<div class="a" style="left:862px;top:438.0px;font-size:16px;color:#a86e04;">MHz</div>
<div class="a" style="left:900px;top:438.0px;width:102px;text-align:right;font-size:16px;color:#a86e04">-22.32 dB</div>
<div class="a" style="left:761px;top:458.0px;font-size:16px;color:#0aa4b0;">1:</div>
<div class="a" style="left:796px;top:458.0px;font-size:16px;color:#0aa4b0;">847.000</div>
<div class="a" style="left:862px;top:458.0px;font-size:16px;color:#0aa4b0;">MHz</div>
<div class="a" style="left:900px;top:458.0px;width:102px;text-align:right;font-size:16px;color:#0aa4b0">-0.85 dB</div>
<div class="a" style="left:761px;top:478.0px;font-size:16px;color:#0aa4b0;">2:</div>
<div class="a" style="left:796px;top:478.0px;font-size:16px;color:#0aa4b0;">832.000</div>
<div class="a" style="left:862px;top:478.0px;font-size:16px;color:#0aa4b0;">MHz</div>
<div class="a" style="left:900px;top:478.0px;width:102px;text-align:right;font-size:16px;color:#0aa4b0">-1.64 dB</div>
<div class="a" style="left:761px;top:498.0px;font-size:16px;color:#0aa4b0;">3:</div>
<div class="a" style="left:796px;top:498.0px;font-size:16px;color:#0aa4b0;">862.000</div>
<div class="a" style="left:862px;top:498.0px;font-size:16px;color:#0aa4b0;">MHz</div>
<div class="a" style="left:900px;top:498.0px;width:102px;text-align:right;font-size:16px;color:#0aa4b0">-1.85 dB</div>
<div class="a" style="left:761px;top:518.0px;font-size:16px;color:#0aa4b0;">4:</div>
<div class="a" style="left:796px;top:518.0px;font-size:16px;color:#0aa4b0;">827.000</div>
<div class="a" style="left:862px;top:518.0px;font-size:16px;color:#0aa4b0;">MHz</div>
<div class="a" style="left:900px;top:518.0px;width:102px;text-align:right;font-size:16px;color:#0aa4b0">-38.99 dB</div>
<div class="a" style="left:749px;top:538.0px;font-size:13px;color:#0aa4b0;margin-top:2px">&gt;</div>
<div class="a" style="left:761px;top:538.0px;font-size:16px;color:#0aa4b0;">5:</div>
<div class="a" style="left:796px;top:538.0px;font-size:16px;color:#0aa4b0;">867.000</div>
<div class="a" style="left:862px;top:538.0px;font-size:16px;color:#0aa4b0;">MHz</div>
<div class="a" style="left:900px;top:538.0px;width:102px;text-align:right;font-size:16px;color:#0aa4b0">-44.31 dB</div>
<div class="a" style="left:761px;top:558.0px;font-size:16px;color:#e070f8;">1:</div>
<div class="a" style="left:796px;top:558.0px;font-size:16px;color:#e070f8;">847.000</div>
<div class="a" style="left:862px;top:558.0px;font-size:16px;color:#e070f8;">MHz</div>
<div class="a" style="left:900px;top:558.0px;width:102px;text-align:right;font-size:16px;color:#e070f8">-0.85 dB</div>
<div class="a" style="left:761px;top:578.0px;font-size:16px;color:#e070f8;">2:</div>
<div class="a" style="left:796px;top:578.0px;font-size:16px;color:#e070f8;">832.000</div>
<div class="a" style="left:862px;top:578.0px;font-size:16px;color:#e070f8;">MHz</div>
<div class="a" style="left:900px;top:578.0px;width:102px;text-align:right;font-size:16px;color:#e070f8">-1.64 dB</div>
<div class="a" style="left:761px;top:598.0px;font-size:16px;color:#e070f8;">3:</div>
<div class="a" style="left:796px;top:598.0px;font-size:16px;color:#e070f8;">862.000</div>
<div class="a" style="left:862px;top:598.0px;font-size:16px;color:#e070f8;">MHz</div>
<div class="a" style="left:900px;top:598.0px;width:102px;text-align:right;font-size:16px;color:#e070f8">-1.85 dB</div>
<div class="a" style="left:761px;top:618.0px;font-size:16px;color:#58f058;">1:</div>
<div class="a" style="left:796px;top:618.0px;font-size:16px;color:#58f058;">847.000</div>
<div class="a" style="left:862px;top:618.0px;font-size:16px;color:#58f058;">MHz</div>
<div class="a" style="left:900px;top:618.0px;width:102px;text-align:right;font-size:16px;color:#58f058">-29.22 dB</div>
<div class="a" style="left:761px;top:638.0px;font-size:16px;color:#58f058;">2:</div>
<div class="a" style="left:796px;top:638.0px;font-size:16px;color:#58f058;">832.000</div>
<div class="a" style="left:862px;top:638.0px;font-size:16px;color:#58f058;">MHz</div>
<div class="a" style="left:900px;top:638.0px;width:102px;text-align:right;font-size:16px;color:#58f058">-30.25 dB</div>
<div class="a" style="left:761px;top:658.0px;font-size:16px;color:#58f058;">3:</div>
<div class="a" style="left:796px;top:658.0px;font-size:16px;color:#58f058;">862.000</div>
<div class="a" style="left:862px;top:658.0px;font-size:16px;color:#58f058;">MHz</div>
<div class="a" style="left:900px;top:658.0px;width:102px;text-align:right;font-size:16px;color:#58f058">-24.60 dB</div>
<div class="a" style="left:761px;top:678.0px;font-size:16px;color:#58f058;">8:</div>
<div class="a" style="left:796px;top:678.0px;font-size:16px;color:#58f058;">837.025</div>
<div class="a" style="left:862px;top:678.0px;font-size:16px;color:#58f058;">MHz</div>
<div class="a" style="left:900px;top:678.0px;width:102px;text-align:right;font-size:16px;color:#58f058">-22.17 dB</div>
<div class="rp">
<div class="title"></div>
<div class="a" style="left:13px;top:13px;font-size:16px;color:#fff">Avg BW</div>
<div class="a" style="left:215px;top:7px;width:25px;height:24px;border:1px solid #a0a8b0;border-radius:4px;background:radial-gradient(ellipse at 50% 100%,#3c8476,#2a4c50);overflow:hidden"><div style="position:absolute;left:2px;top:2px;width:19px;height:6px;background:#8898a0"></div><svg style="position:absolute;left:0;top:0" width="25" height="24"><path d="M7.8 7.5 L15.2 15 M15.2 7.5 L7.8 15" stroke="#fff" stroke-width="2"/></svg></div>
<div class="a" style="left:158px;top:104px;width:91px;height:620px;background:#5a5a5a;border-top-left-radius:9px;border-left:1px solid #3c3c3c;border-top:1px solid #3c3c3c"></div>
<div class="a" style="left:158px;top:167px;width:91px;height:2px;background:#3a3a3a"></div>
<div class="a" style="left:158px;top:231px;width:91px;height:2px;background:#3a3a3a"></div>
<div class="a" style="left:187px;top:65px;font-size:16px;color:#f0f0f4">Main</div>
<div class="a" style="left:165px;top:127px;font-size:16px;color:#e4e4dc">Smoothing</div>
<div class="a" style="left:158px;top:180px;width:91px;text-align:center;font-size:16px;color:#e4e4dc;line-height:20px">Delay<br>Aperture</div>
<div class="btn" style="left:5px;top:47px;width:37px;height:71px"><div style="position:absolute;left:8px;top:32px;width:21px;height:11px;border-radius:3px;background:#8c8c8c;border:1px solid #606060"></div></div>
<div class="btn" style="left:47px;top:47px;width:107px;height:71px"><div class="a" style="left:0;top:11px;width:107px;text-align:center">Averaging</div><div class="val" style="left:7px;top:43px;width:93px">3000</div></div>
<div class="btn" style="left:5px;top:130px;width:149px;height:71px"><div class="a" style="left:0;top:18px;width:149px;text-align:center;line-height:19px;margin-top:-1px">Averaging<br>Restart</div></div>
<div class="btn" style="left:5px;top:213px;width:149px;height:71px"><div class="a" style="left:0;top:11px;width:149px;text-align:center">Average Type</div><div class="val" style="left:6px;top:43px;width:136px;background:linear-gradient(90deg,#d8d8d8 50%,#e4e4e4 50%)"><span style="position:absolute;left:0;width:68px;color:#a8a8a8;font-size:12px">point</span><span style="position:absolute;left:68px;width:68px;color:#303030;font-size:12px">SWEEP</span></div></div>
<div class="empty" style="top:295px;left:4px;width:151px"></div>
<div class="btn" style="left:5px;top:379px;width:149px;height:71px"><div class="a" style="left:0;top:11px;width:149px;text-align:center">IF Bandwidth</div><div class="val" style="left:6px;top:43px;width:136px;font-size:12px">1 kHz</div></div>
<div class="btn" style="left:5px;top:463px;width:149px;height:71px"><div class="a" style="left:0;top:11px;width:130px;text-align:center">IF BW Shape</div><div class="a" style="left:130px;top:13px;font-size:13px;color:#6c6c6c">&#9660;</div><div class="val" style="left:6px;top:43px;width:136px;font-size:12px">Standard</div></div>
<div class="btn" style="left:5px;top:546px;width:149px;height:71px"><div class="a" style="left:0;top:11px;width:149px;text-align:center">LF Auto BW</div><div class="val" style="left:6px;top:43px;width:136px;background:linear-gradient(90deg,#e2e2e2 50%,#d8d8d8 50%)"><span style="position:absolute;left:0;width:68px;color:#303030;font-size:12px">ON</span><span style="position:absolute;left:68px;width:68px;color:#a8a8a8;font-size:12px">off</span></div></div>
<div class="empty" style="top:628px;left:4px;width:151px"></div>
</div>
<div class="sb" style="left:4px;top:753px;width:46px">Tr 2</div>
<div class="sb" style="left:56px;top:753px;width:51px">Ch 1</div>
<div class="sb" style="left:113px;top:753px;width:59px">IntTrig</div>
<div class="sb" style="left:178px;top:753px;width:51px">Swp</div>
<div class="sb" style="left:235px;top:753px;width:75px">BW=1k</div>
<div class="sb" style="left:316px;top:753px;width:81px">C  2-Port</div>
<div class="sb dis" style="left:403px;top:753px;width:51px">SrcCal</div>
<div class="sb dis" style="left:460px;top:753px;width:37px">Fix</div>
<div class="sb dis" style="left:503px;top:753px;width:47px">Pulse</div>
<div class="sb" style="left:556px;top:753px;width:720px"></div>
<div class="sb dis" style="left:4px;top:776px;width:39px">Svc</div>
<div class="sb" style="left:49px;top:776px;width:62px">RFOn</div>
<div class="sb" style="left:117px;top:776px;width:81px">UpdateOn</div>
<div class="sb" style="left:204px;top:776px;width:61px">IntRef</div>
<div class="sb" style="left:272px;top:776px;width:1004px"></div>
<div class="a" style="left:0;top:799px;width:1280px;height:2px;background:#000"></div>
<svg style="position:absolute;left:0;top:0;pointer-events:none" width="1280" height="801"><defs><clipPath id="cp"><rect x="1021" y="300" width="100" height="100"/></clipPath></defs><g clip-path="url(#cp)"><text transform="translate(200,364) scale(1.08,0.98)" x="0" y="0" font-family="Liberation Serif" font-weight="bold" font-size="66" fill="rgba(0,0,0,0.1)" textLength="803.7" lengthAdjust="spacing">www.xahxmicrowave.com</text></g></svg>
</body></html>
